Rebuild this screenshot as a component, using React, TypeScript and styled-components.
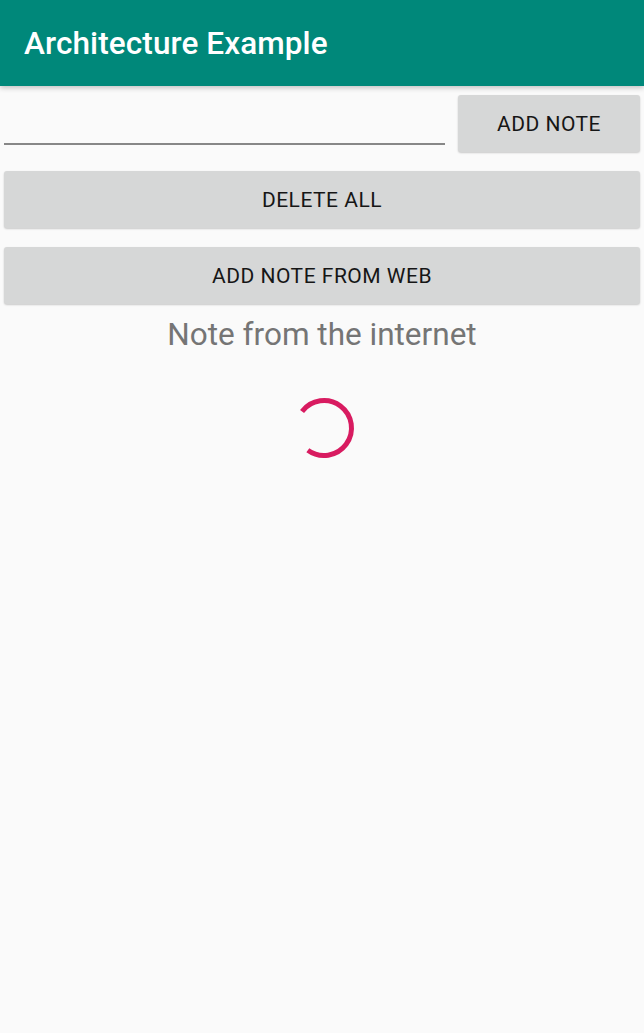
import styled, { createGlobalStyle } from "styled-components"

const GlobalStyle = createGlobalStyle`
  html, body {
    margin: 0;
    padding: 0;
    background: #fafafa;
    font-family: Roboto, "Noto Sans", sans-serif;
  }
`

const Screen = styled.div`
  width: 644px;
  height: 1033px;
  background: #fafafa;
  overflow: hidden;
`

const AppBar = styled.header`
  height: 86px;
  background: #00887a;
  display: flex;
  align-items: center;
  padding: 0 24px;
  box-sizing: border-box;
  box-shadow: 0 2px 5px rgba(0, 0, 0, 0.22);
  position: relative;
  z-index: 1;
`

const Title = styled.h1`
  margin: 0;
  color: #fff;
  font-size: 31.5px;
  font-weight: 500;
  letter-spacing: 0.1px;
`

const Content = styled.main`
  padding: 9px 4px 0;
  display: flex;
  flex-direction: column;
  gap: 19px;
`

const InputRow = styled.div`
  display: flex;
  gap: 13px;
  height: 57px;
`

const NoteInput = styled.input`
  flex: 1;
  border: none;
  border-bottom: 2px solid #878787;
  background: transparent;
  margin-bottom: 7px;
  font-family: inherit;
  font-size: 22px;
  outline: none;
  padding: 0 4px;
`

const Button = styled.button<{ $wide?: boolean }>`
  width: ${p => (p.$wide ? "100%" : "182px")};
  height: 57px;
  border: none;
  border-radius: 3px;
  background: #d6d7d7;
  box-shadow: 0 1px 2px rgba(0, 0, 0, 0.2);
  color: #161616;
  font-family: Roboto, "Noto Sans", sans-serif;
  font-size: 21px;
  font-weight: 400;
  letter-spacing: 0.5px;
  text-transform: uppercase;
  cursor: pointer;
`

const NoteText = styled.p`
  margin: -6px 0 0;
  text-align: center;
  color: #757575;
  font-size: 31.5px;
  line-height: 36px;
`

const SpinnerWrap = styled.div`
  display: flex;
  justify-content: center;
  margin-top: 43px;
  padding-left: 4px;
`

function Spinner() {
  const r = 27.5
  const cx = 32
  const cy = 32
  const a0 = (-143 * Math.PI) / 180
  const a1 = (126 * Math.PI) / 180
  const x0 = cx + r * Math.cos(a0)
  const y0 = cy + r * Math.sin(a0)
  const x1 = cx + r * Math.cos(a1)
  const y1 = cy + r * Math.sin(a1)
  return (
    <svg width="64" height="64" viewBox="0 0 64 64">
      <path
        d={`M ${x0} ${y0} A ${r} ${r} 0 1 1 ${x1} ${y1}`}
        fill="none"
        stroke="#d81b60"
        strokeWidth="5"
      />
    </svg>
  )
}

export default function App() {
  return (
    <Screen>
      <GlobalStyle />
      <AppBar>
        <Title>Architecture Example</Title>
      </AppBar>
      <Content>
        <InputRow>
          <NoteInput />
          <Button>Add Note</Button>
        </InputRow>
        <Button $wide>Delete All</Button>
        <Button $wide>Add Note From Web</Button>
        <NoteText>Note from the internet</NoteText>
      </Content>
      <SpinnerWrap>
        <Spinner />
      </SpinnerWrap>
    </Screen>
  )
}
